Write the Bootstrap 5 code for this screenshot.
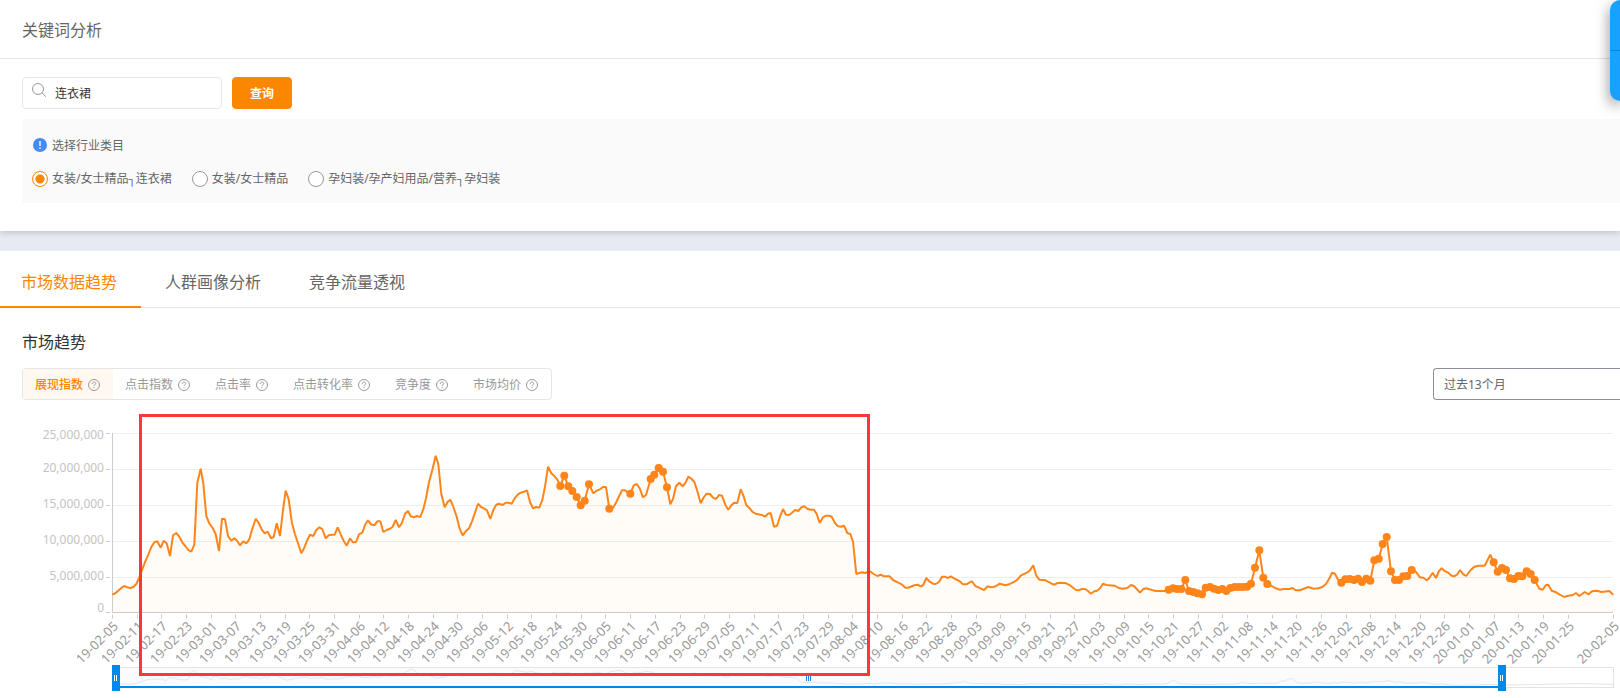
<!DOCTYPE html>
<html lang="zh-CN">
<head>
<meta charset="utf-8">
<meta name="viewport" content="width=device-width, initial-scale=1">
<title>关键词分析</title>
<link rel="stylesheet" href="https://cdn.jsdelivr.net/npm/bootstrap@5.3.0/dist/css/bootstrap.min.css">
<style>
  body { font-family: "Noto Sans", "Noto Sans CJK SC", sans-serif; font-size: 12px; line-height: 20px; color: #666; background: #e7eaf3; overflow-x: hidden; }
  .page-title { font-size: 16px; line-height: 24px; font-weight: 400; padding: 18px 22px 16px; border-bottom: 1px solid #e6e6e6; }
  .panel-top { box-shadow: 0 2px 6px rgba(0,0,0,.16); padding-bottom: 28px; }
  .search-row { padding: 18px 0 10px 22px; gap: 10px; }
  .search-box { width: 200px; height: 32px; border: 1px solid #e6e6e6; border-radius: 4px; padding: 2px 9px 0; }
  .search-box input { font-size: 12px; color: #333; outline: 0; line-height: 20px; min-width: 0; }
  .search-box svg { margin-bottom: 8px; }
  .btn-query { width: 60px; height: 32px; font-size: 12px; font-weight: 700; line-height: 20px; padding: 2px 0 0; border-radius: 4px; --bs-btn-color: #fff; --bs-btn-bg: #fb8600; --bs-btn-border-color: #fb8600; --bs-btn-hover-color: #fff; --bs-btn-hover-bg: #e67a00; }
  .category { margin-left: 22px; padding: 17px 10px 14px; background: #fafafa; gap: 13px; }
  .choice { margin: 0; padding: 0; min-height: 0; gap: 4px; }
  .choice .form-check-input { float: none; margin: 2px 0 0; width: 16px; height: 16px; border: 1px solid #999; background-color: #fff; }
  .choice .form-check-input:checked { border-color: #fb8600; background-color: #fff; background-image: radial-gradient(circle, #fb8600 4px, transparent 5px); }
  .sep { font-family: "Liberation Mono", monospace; line-height: 12px; }
  .panel-main { margin-top: 20px; }
  .tab-bar { --bs-nav-link-color: #666; border-bottom: 1px solid #e6e6e6; }
  .tab-bar .nav-link { font-size: 16px; line-height: 24px; padding: 19px 24px 12px; border-bottom: 2px solid transparent; margin-bottom: -1px; }
  .tab-bar .nav-link:first-child { padding-left: 21px; }
  .tab-bar .nav-link.active { color: #fb8600; border-color: #fb8600; }
  .trend-title { font-size: 16px; line-height: 24px; font-weight: 400; color: #333; padding: 22px 22px 14px; }
  .metric-group { margin-left: 22px; height: 32px; border: 1px solid #e6e6e6; border-radius: 4px; overflow: hidden; }
  .metric { border: 0; background: none; color: #999; padding: 2px 13px 0 12px; gap: 5px; font-size: 12px; }
  .metric.active { background: #fff8f0; color: #fb8600; font-weight: 500; }
  .metric svg { color: #999; }
  .period { width: 187px; height: 32px; border: 1px solid #8c8c9c; border-right: 0; border-radius: 4px 0 0 4px; font-size: 12px; line-height: 20px; color: #666; padding: 2px 10px 0; background-image: none; }
  .chart { width: 100%; display: block; font-size: 12px; }
  .chart .date-label { font-size: 13px; }
  .side-tool { position: absolute; top: 0; right: 0; width: 10px; height: 101px; background: #18a2ff; border-radius: 10px 0 0 10px; box-shadow: 0 5px 14px rgba(0,0,0,.5); z-index: 2; }
  .side-tool button { background: none; border: 0; padding: 0; height: 50px; }
  .side-tool button + button { border-top: 1px solid #1380c8; }
</style>
</head>
<body>
<aside class="side-tool d-flex flex-column"><button type="button" aria-label="客服"></button><button type="button" aria-label="反馈"></button></aside>

<section class="panel-top bg-white position-relative">
  <h1 class="page-title m-0">关键词分析</h1>
  <form class="search-row d-flex align-items-center" onsubmit="return false">
    <label class="search-box d-flex align-items-center gap-2 mb-0">
      <svg class="flex-shrink-0" width="15" height="14" viewBox="0 0 15 14" fill="none" stroke="#999"><circle cx="6" cy="6" r="5.500"/><path d="M10 10l4 3.700"/></svg>
      <input class="border-0 p-0 flex-grow-1 w-100" type="text" value="连衣裙" aria-label="关键词">
    </label>
    <button class="btn btn-query" type="submit">查询</button>
  </form>
  <div class="category d-flex flex-column">
    <div class="d-flex align-items-center gap-1">
      <svg width="16" height="16" viewBox="0 0 16 16"><circle cx="8" cy="7" r="7" fill="#438af5"/><path d="M8 3v5M8 9.500v1.500" stroke="#fff" stroke-width="1.400"/></svg>
      <span>选择行业类目</span>
    </div>
    <div class="d-flex align-items-center gap-3">
      <div class="choice form-check d-flex me-1"><input class="form-check-input" type="radio" name="cat" id="c1" checked><label for="c1">女装/女士精品<span class="sep">┐</span>连衣裙</label></div>
      <div class="choice form-check d-flex me-1"><input class="form-check-input" type="radio" name="cat" id="c2"><label for="c2">女装/女士精品</label></div>
      <div class="choice form-check d-flex"><input class="form-check-input" type="radio" name="cat" id="c3"><label for="c3">孕妇装/孕产妇用品/营养<span class="sep">┐</span>孕妇装</label></div>
    </div>
  </div>
</section>

<main class="panel-main bg-white">
  <nav class="tab-bar nav">
    <a class="nav-link active" href="#">市场数据趋势</a>
    <a class="nav-link" href="#">人群画像分析</a>
    <a class="nav-link" href="#">竞争流量透视</a>
  </nav>
  <h2 class="trend-title m-0">市场趋势</h2>
  <div class="d-flex justify-content-between">
    <div class="metric-group d-flex" id="metrics"></div>
    <select class="period form-select" aria-label="时间范围"><option>过去13个月</option></select>
  </div>
  <svg class="chart" id="chart" viewBox="0 400 1620 298" role="img" aria-label="展现指数趋势"></svg>
</main>

<script src="https://cdn.jsdelivr.net/npm/bootstrap@5.3.0/dist/js/bootstrap.bundle.min.js"></script>
<script>
  document.getElementById('metrics').innerHTML = ['展现指数', '点击指数', '点击率', '点击转化率', '竞争度', '市场均价'].map((name, i) =>
    `<button type="button" class="metric d-flex align-items-center ${i ? '' : 'active'}">${name}<svg width="12" height="12" viewBox="0 0 12 12" fill="none" stroke="currentColor"><circle cx="6" cy="6" r="5.500"/><path d="M4.300 4.800C4.300 2.400 7.700 2.500 7.700 4.600C7.700 5.800 6 5.800 6 7.200M6 8.200v1"/></svg></button>`).join('');

  // Trend samples: each block has a left offset and x,y pairs, three units per chart pixel.
  const blocks = [
    [0, '337,584 347,579 356,571 365,563 373,558 382,562 391,564 400,561 409,552 418,532 427,508 436,484 445,464 454,441 463,427 472,424 482,443 491,422 500,430 510,468 519,406 529,399 537,409 547,427 556,438 565,450 574,455 583,434 592,248 602,206 610,250 619,348 628,370 638,384 647,403 657,453 666,356 675,358 684,408 694,422 703,415 711,422 720,436 730,424 739,430 748,418 757,386 767,356 776,369 785,388 794,400 803,395 813,415 821,411 830,370 840,408 849,330 857,272 866,298 876,370 885,403 894,430 904,460 913,443 922,420 930,404 940,408 949,390 958,382 967,387 977,415 986,406 995,404 1004,404 1013,382 1022,403 1031,423 1040,437 1050,415 1059,427 1068,426 1077,403 1087,398 1095,375 1104,361 1113,373 1123,376 1132,364 1141,364 1150,396 1160,390 1170,386 1178,380 1187,360 1197,382'],
    [1140, '66,368 75,341 84,333 92,349 101,352 110,348 121,351 130,328 138,295 147,247 157,210 167,167 175,192 184,282 194,322 203,305 211,299 220,320 230,350 239,386 248,406 257,394 267,385 276,364 285,338 294,311 303,321 312,325 321,331 331,357 340,330 349,314 357,311 368,315 377,308 386,308 395,311 404,295 413,284 422,278 432,275 441,271 450,306 459,325 468,321 478,323 487,300 495,260 504,200 514,220 523,228 532,238 541,258 553,227 565,259 577,273 590,291 602,316 614,302 627,253 640,280 650,272 660,268 669,261 678,261 688,326 698,325 707,310 716,291 726,271 735,271 751,281 761,256 770,252 779,265 789,292 798,285 812,237 823,224 836,204 849,215 861,262 871,313 879,297 888,259 898,248 908,259 917,247 925,230 934,236 943,245 952,273 962,310 971,292 980,281 990,282 999,293 1008,297 1017,285 1026,287 1036,314 1045,329 1053,317 1062,308 1072,309 1082,268 1090,286 1099,316 1109,325 1118,336 1127,341 1146,345 1155,350 1164,341 1172,339 1182,380 1191,377'],
    [2280, '60,350 69,327 78,344 87,345 96,338 105,330 115,333 124,322 133,319 142,326 151,329 162,329 170,342 179,369 189,352 198,347 207,347 215,350 225,369 234,379 243,380 252,377 262,399 271,402 279,425 289,522 298,519 307,517 315,519 330,514 341,522 352,528 362,524 372,529 389,529 399,540 415,548 425,553 436,563 445,563 463,556 473,554 482,559 490,555 499,534 509,545 519,551 527,552 537,546 546,530 555,530 563,534 572,529 582,535 598,543 609,553 619,553 628,548 636,544 646,558 655,562 672,570 683,559 693,562 701,561 710,557 719,551 737,556 747,553 765,544 773,538 783,526 801,518 810,511 820,496 829,527 838,539 857,541 866,546 875,551 883,554 893,549 904,548 919,550 930,556 941,565 948,570 956,571 966,567 976,567 984,573 993,581 1003,574 1011,572 1020,565 1029,551 1039,555 1064,557 1076,564 1087,566 1102,564 1113,555 1122,558 1130,567 1140,578 1149,568 1158,565 1176,570 1187,573 1216,573'],
    [3480, '26,569 39,565 51,567 64,567 76,540 87,573 100,576 112,580 126,583 137,563 150,561 162,566 175,570 187,567 199,573 211,564 224,561 236,561 248,561 261,560 273,551 285,503 298,451 310,533 322,552 332,556 345,564 360,569 370,567 388,567 397,564 408,571 420,571 445,561 460,566 475,565 487,561 498,552 510,532 516,518 525,521 535,541 544,548 556,538 569,537 582,540 594,536 606,546 619,536 631,542 643,481 656,476 668,432 680,411 693,514 705,540 717,540 730,529 742,528 755,510 767,515 780,532 790,533 800,541 808,534 818,518 828,534 837,513 845,505 854,513 865,518 875,527 882,529 891,524 900,510 910,523 919,528 930,512 942,501 955,497 974,497 983,479 991,464 1001,487 1013,515 1026,504 1038,510 1050,535 1062,537 1075,528 1087,529 1100,514 1112,522 1124,540 1138,566 1148,569 1157,556 1165,554 1175,572 1188,577 1212,591 1222,588 1238,585 1248,579 1258,588 1274,576 1286,583 1296,574 1310,572 1325,576 1348,573 1360,584']
  ];
  const points = blocks.flatMap(([dx, text]) => text.split(' ').map(p => {
    const [x, y] = p.split(',').map(Number);
    return [(x + dx) / 3, 400 + y / 3];
  }));
  // Highlighted promotion periods, as x ranges on the time axis.
  const promo = [[560, 590], [608, 611], [629, 632], [650, 668], [1168, 1268], [1341, 1412], [1493, 1536]];
  const left = 112, right = 1613, base = 612;
  const line = points.map(p => p.map(v => v.toFixed(1)).join()).join(' ');
  let out = '';
  const labelY = [439, 472, 508, 544, 580, 612];
  ['25,000,000', '20,000,000', '15,000,000', '10,000,000', '5,000,000', '0'].forEach((t, i) => {
    const y = [433, 469, 505, 541, 577, 612][i] + 0.5;
    if (i < 5) out += `<path d="M113 ${y}H${right}" stroke="#eee"/>`;
    out += `<path d="M106 ${y}h4" stroke="#ccc"/><text x="104" y="${labelY[i]}" text-anchor="end" fill="#c4c4c4">${t}</text>`;
  });
  out += `<polygon points="${left},${base} ${line} ${right},${base}" fill="#fb8600" fill-opacity=".03"/>`;
  out += `<path d="M112.500 433V612.500H${right}" fill="none" stroke="#ccc"/>`;
  const start = Date.UTC(2019, 1, 5);
  const days = [...Array(60).keys()].map(i => i * 6).concat(365);
  days.forEach(d => {
    const x = Math.round(left + d * (right - left) / 365);
    const label = new Date(start + d * 864e5).toISOString().slice(2, 10);
    out += `<path d="M${x + 0.5} 614.500v4" stroke="#ccc"/><text class="date-label" transform="translate(${x + 7} 627) rotate(-45)" text-anchor="end" fill="#999">${label}</text>`;
  });
  out += `<polyline points="${line}" fill="none" stroke="#ff851b" stroke-width="2" stroke-linejoin="bevel"/>`;
  points.filter(p => promo.some(r => p[0] >= r[0] && p[0] <= r[1])).forEach(p => {
    out += `<circle cx="${p[0].toFixed(1)}" cy="${p[1].toFixed(1)}" r="4" fill="#ff851b"/>`;
  });
  const mini = points.map(([x, y]) => `${(left + (x - left) * 0.926).toFixed(1)},${(687 - (base - y) * 0.115).toFixed(1)}`).join(' ');
  out += `<rect x="112.500" y="667.500" width="1501" height="20" fill="#fff" stroke="#e3e3e3"/>
    <rect x="113" y="668" width="1389" height="19" fill="#fbfbfb"/>
    <polyline points="${mini} 1540,684.500 1580,683.500 1600,684 1613,684.500" fill="none" stroke="#e6e6e6"/>
    <path d="M112 687H1502" stroke="#0089e8" stroke-width="2"/>
    <path d="M806.500 676v5M808.500 676v5M810.500 676v5" stroke="#0089e8"/>
    <g fill="#0089e8"><rect x="112" y="665" width="8" height="26"/><rect x="1498" y="665" width="8" height="26"/></g>
    <path d="M114.500 675v6M116.500 675v6M1500.500 675v6M1502.500 675v6" stroke="#fff"/>
    <rect x="140.500" y="415.500" width="728" height="259" fill="none" stroke="#fb3838" stroke-width="3"/>`;
  document.getElementById('chart').innerHTML = out;
</script>
</body>
</html>
